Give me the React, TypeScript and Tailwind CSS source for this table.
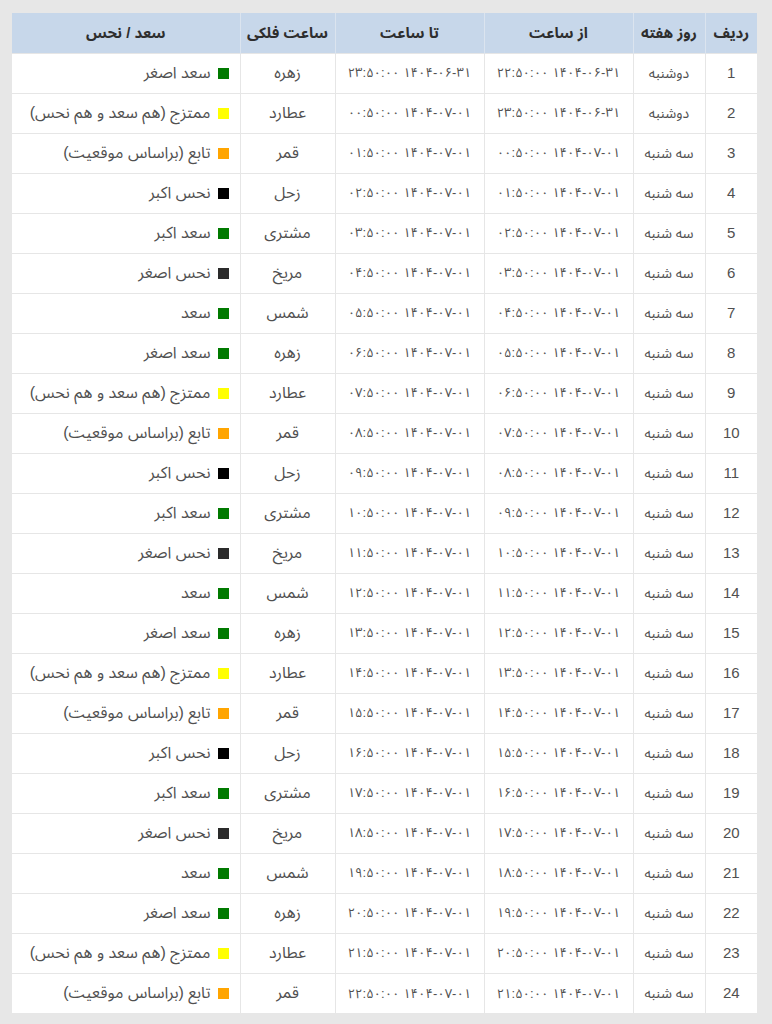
const planets = ["زهره", "عطارد", "قمر", "زحل", "مشتری", "مریخ", "شمس"];

const nature: Record<string, { label: string; color: string }> = {
  "زهره": { label: "سعد اصغر", color: "bg-[#007a00]" },
  "عطارد": { label: "ممتزج (هم سعد و هم نحس)", color: "bg-[#ffff00]" },
  "قمر": { label: "تابع (براساس موقعیت)", color: "bg-[#ffa500]" },
  "زحل": { label: "نحس اکبر", color: "bg-[#000000]" },
  "مشتری": { label: "سعد اکبر", color: "bg-[#007a00]" },
  "مریخ": { label: "نحس اصغر", color: "bg-[#2b2b2b]" },
  "شمس": { label: "سعد", color: "bg-[#007a00]" },
};

const fa = (s: string) => s.replace(/[0-9]/g, (d) => "۰۱۲۳۴۵۶۷۸۹"[Number(d)]);
const pad = (n: number) => String(n).padStart(2, "0");

const rows = Array.from({ length: 24 }, (_, i) => {
  const fromH = (22 + i) % 24;
  const toH = (23 + i) % 24;
  const fromDate = i < 2 ? "1404-06-31" : "1404-07-01";
  const toDate = i < 1 ? "1404-06-31" : "1404-07-01";
  return {
    id: i + 1,
    day: i < 2 ? "دوشنبه" : "سه شنبه",
    from: fa(`${fromDate} ${pad(fromH)}:50:00`),
    to: fa(`${toDate} ${pad(toH)}:50:00`),
    planet: planets[i % 7],
  };
});

export default function App() {
  return (
    <div
      className="min-h-[1024px] bg-[#e7e7e7] pl-[12px] pr-[15px] pt-[13px]"
      style={{ fontFamily: '"Liberation Sans", "Noto Sans Arabic", "Noto Naskh Arabic", "DejaVu Sans", sans-serif' }}
    >
      <table dir="rtl" className="w-[745px] table-fixed border-collapse bg-white text-[15px] text-[#505050]">
        <colgroup>
          <col className="w-[52px]" />
          <col className="w-[72px]" />
          <col className="w-[149px]" />
          <col className="w-[149px]" />
          <col className="w-[95px]" />
          <col className="w-[228px]" />
        </colgroup>
        <thead>
          <tr className="h-[40px] bg-[#c7d7ea] text-[15px] font-bold text-[#2e2e2e]">
            <th className="border-l border-[#dbe4ef] font-bold">ردیف</th>
            <th className="border-l border-[#dbe4ef] font-bold">روز هفته</th>
            <th className="border-l border-[#dbe4ef] font-bold">از ساعت</th>
            <th className="border-l border-[#dbe4ef] font-bold">تا ساعت</th>
            <th className="border-l border-[#dbe4ef] font-bold">ساعت فلکی</th>
            <th className="font-bold">سعد / نحس</th>
          </tr>
        </thead>
        <tbody>
          {rows.map((r) => {
            const n = nature[r.planet];
            return (
              <tr key={r.id} className="h-[40px] border-t border-[#e6e6e6]">
                <td className="border-l border-[#e6e6e6] text-center">{r.id}</td>
                <td className="border-l border-[#e6e6e6] text-center text-[14px]">{r.day}</td>
                <td className="border-l border-[#e6e6e6] text-center text-[13px]">{r.from}</td>
                <td className="border-l border-[#e6e6e6] text-center text-[13px]">{r.to}</td>
                <td className="border-l border-[#e6e6e6] text-center text-[16px]">{r.planet}</td>
                <td className="pr-[11px]">
                  <div className="flex items-center gap-[7px] text-[16px]">
                    <span className={`inline-block h-[11px] w-[11px] shrink-0 ${n.color}`} />
                    <span>{n.label}</span>
                  </div>
                </td>
              </tr>
            );
          })}
        </tbody>
      </table>
    </div>
  );
}
